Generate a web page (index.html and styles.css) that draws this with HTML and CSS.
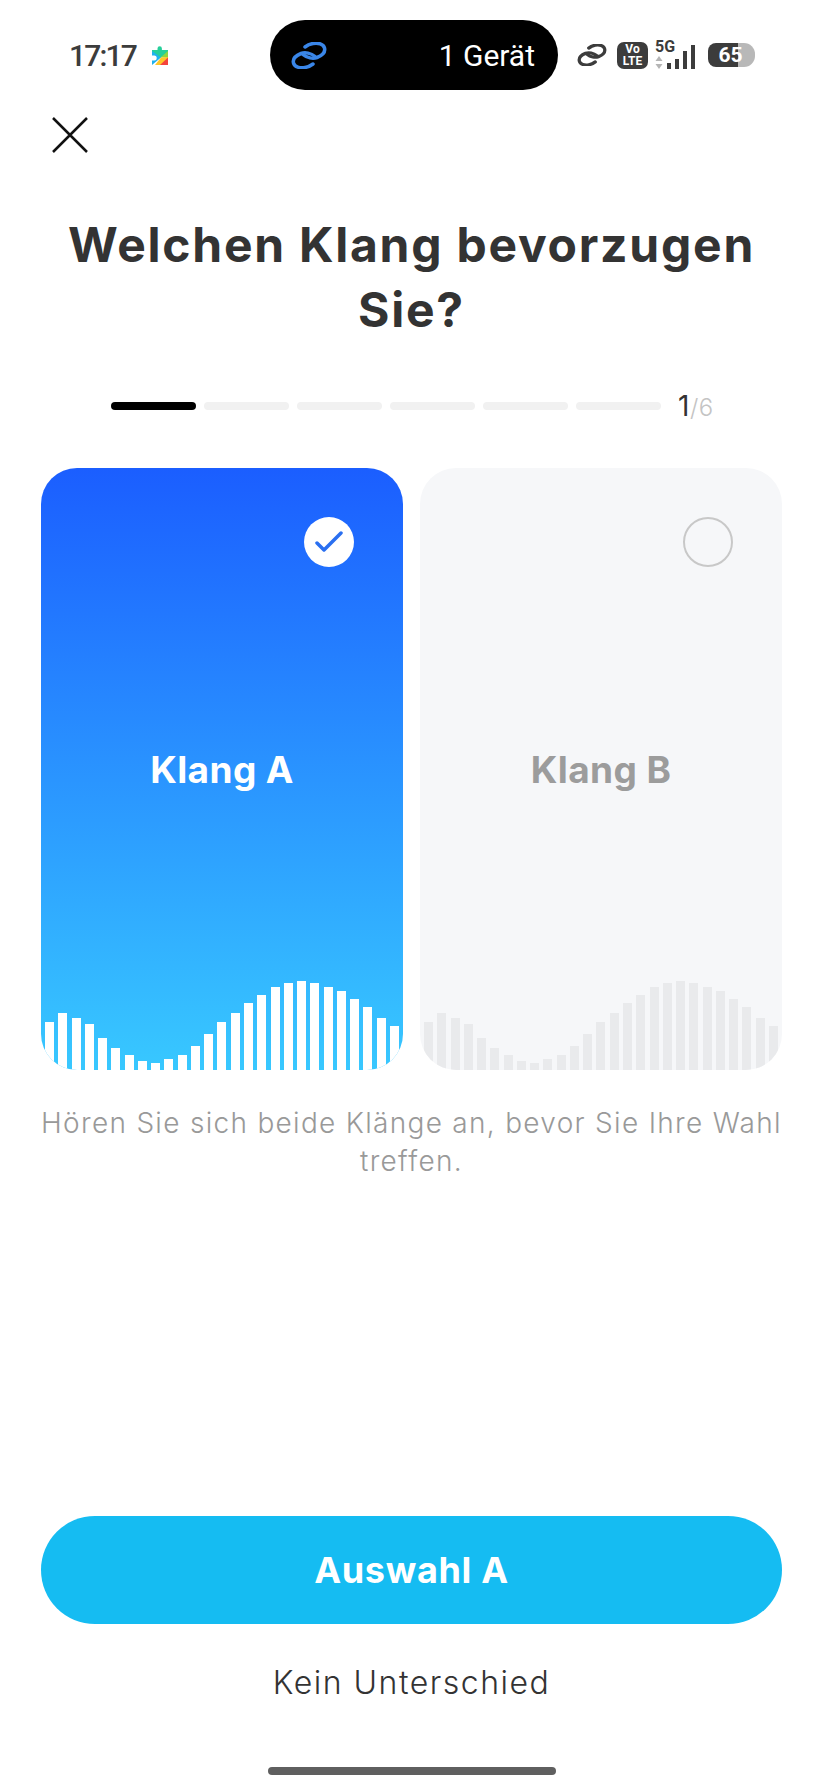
FILE: index.html
```html
<!DOCTYPE html>
<html lang="de">
<head>
    <meta charset="UTF-8">
    <meta name="viewport" content="width=device-width, initial-scale=1.0">
    <title>Klangauswahl</title>
    <link rel="stylesheet" href="styles.css">
</head>
<body>

<div class="page">
    <div class="status-bar">
        <span class="time">17:17</span>
        <svg class="puzzle" viewBox="0 0 16 19" width="16" height="19">
            <path d="M0 4h5.500V2.500a2.200 2.200 0 0 1 4.400 0V4H16v3L8 12 0 7z" fill="#25cf9a"/>
            <path d="M0 5l9 6.500L0 19v-4.500h2.200a2.400 2.400 0 0 0 0-5H0z" fill="#1fb2ee"/>
            <path d="M16 5v6.500L8.500 11.500z" fill="#8fd640"/>
            <path d="M16 11v8H3l6-7.500z" fill="#ffc629"/>
            <path d="M16 11.500V19H8z" fill="#f4433c"/>
        </svg>
        <div class="island">
            <svg class="chain chain-blue" viewBox="0 0 36 27" width="36" height="27">
                <path d="M24 14.500C20 11 14 10 10 11.500 5 13.500 1.500 17 2.500 21c1 4 6.500 5.500 11.500 4.500 3-.5 6-2 8-3.500"/>
                <path d="M12 12.500c4 3.500 10 4.500 14 3 5-2 8.500-5.500 7.500-9.500-1-4-6.500-5.500-11.500-4.500-3 .5-6 2-8 3.500"/>
            </svg>
            <span>1 Gerät</span>
        </div>
        <svg class="chain chain-dark" viewBox="0 0 36 27" width="30" height="22">
            <path d="M24 14.500C20 11 14 10 10 11.500 5 13.500 1.500 17 2.500 21c1 4 6.500 5.500 11.500 4.500 3-.5 6-2 8-3.500"/>
            <path d="M12 12.500c4 3.500 10 4.500 14 3 5-2 8.500-5.500 7.500-9.500-1-4-6.500-5.500-11.500-4.500-3 .5-6 2-8 3.500"/>
        </svg>
        <div class="volte"><span>Vo</span><span>LTE</span></div>
        <div class="signal">
            <span class="five-g">5G</span>
            <div class="signal-row">
                <svg class="arrows" viewBox="0 0 8 13" width="8" height="13">
                    <path d="M4 0l3.500 5h-7z" fill="#b5b5b5"/>
                    <path d="M4 13l3.500-5h-7z" fill="#b5b5b5"/>
                </svg>
                <i class="sig-1"></i><i class="sig-2"></i><i class="sig-3"></i><i class="sig-4"></i>
            </div>
        </div>
        <div class="battery"><span>65</span></div>
    </div>

    <svg class="close" viewBox="0 0 36 36" width="36" height="36">
        <path d="M1 1l34 34M35 1L1 35"/>
    </svg>

    <h1 class="title">Welchen Klang bevorzugen Sie?</h1>

    <div class="progress">
        <div class="step active"></div>
        <div class="step"></div>
        <div class="step"></div>
        <div class="step"></div>
        <div class="step"></div>
        <div class="step"></div>
        <div class="counter"><b>1</b>/6</div>
    </div>

    <div class="cards">
        <div class="card selected">
            <div class="check">
                <svg viewBox="0 0 28 22" width="28" height="22"><path d="M2 12l7 7L26 2"/></svg>
            </div>
            <div class="label">Klang A</div>
            <div class="bars" id="barsA"></div>
        </div>
        <div class="card">
            <div class="check"></div>
            <div class="label">Klang B</div>
            <div class="bars" id="barsB"></div>
        </div>
    </div>

    <p class="note">Hören Sie sich beide Klänge an, bevor Sie Ihre Wahl treffen.</p>

    <button class="button">Auswahl A</button>
    <div class="no-diff">Kein Unterschied</div>
    <div class="home-bar"></div>
</div>

<script>
    // Höhen der Balken, für beide Karten gleich
    const heights = [48, 57, 52, 46, 32, 22, 15, 9, 7, 11, 15, 24, 36, 48, 57, 67, 75, 83, 87, 89, 87, 83, 79, 71, 63, 52, 44];

    ["barsA", "barsB"].forEach(id => {
        const box = document.getElementById(id);
        heights.forEach(h => {
            const bar = document.createElement("div");
            bar.style.height = h + "px";
            box.appendChild(bar);
        });
    });
</script>

</body>
</html>
```

FILE: styles.css
```css
body {
    margin: 0;
    background-color: #fff;
    font-family: Inter, "Open Sans", sans-serif;
}

.page {
    display: flex;
    flex-direction: column;
    height: 1788px;
    box-sizing: border-box;
    overflow: hidden;
}

/* Statusleiste */
.status-bar {
    display: flex;
    align-items: center;
    height: 70px;
    margin-top: 20px;
    padding-left: 69px;
    font-family: Roboto, sans-serif;
    color: #3c3c3c;
}

.time {
    width: 83px;
    font-size: 30px;
    font-weight: 500;
    letter-spacing: -1.8px;
}

.puzzle {
    margin-right: 102px;
}

.island {
    display: flex;
    align-items: center;
    justify-content: space-between;
    width: 288px;
    height: 70px;
    box-sizing: border-box;
    padding: 0 23px 0 21px;
    margin-right: 19px;
    border-radius: 35px;
    background-color: #000;
    color: #fff;
    font-size: 30px;
}

.chain {
    fill: none;
    stroke-width: 3.500;
    stroke-linecap: round;
}

.chain-blue {
    stroke: #3a86e8;
}

.chain-dark {
    stroke: #3c3c3c;
    stroke-width: 4;
    margin-right: 10px;
}

.volte {
    display: flex;
    flex-direction: column;
    align-items: center;
    justify-content: center;
    width: 31px;
    height: 27px;
    margin-right: 7px;
    border-radius: 7px;
    background-color: #3c3c3c;
    color: #fff;
    font-size: 12px;
    font-weight: 700;
    line-height: 12px;
}

.signal {
    display: flex;
    flex-direction: column;
    width: 41px;
    margin-right: 12px;
}

.five-g {
    font-size: 16px;
    font-weight: 700;
    line-height: 12px;
    margin-bottom: 2px;
}

.signal-row {
    display: flex;
    align-items: flex-end;
    height: 14px;
    gap: 3.600px;
}

.signal-row .arrows {
    flex: none;
}

.signal-row i {
    display: block;
    flex: none;
    width: 4.500px;
    background-color: #3c3c3c;
}

.sig-1 { height: 6px; }
.sig-2 { height: 10px; }
.sig-3 { height: 18px; }
.sig-4 { height: 24px; }

.battery {
    display: flex;
    align-items: center;
    justify-content: center;
    width: 47px;
    height: 24px;
    box-sizing: border-box;
    padding-right: 2px;
    border-radius: 8px 11px 11px 8px;
    background: linear-gradient(to right, #3c3c3c 30px, #b8b8b8 30px);
    color: #fff;
    font-size: 21px;
    font-weight: 700;
}

/* Inhalt */
.close {
    flex: none;
    margin: 27px 0 0 52px;
    fill: none;
    stroke: #111;
    stroke-width: 2.500;
}

.title {
    margin: 59px 60px 0;
    color: #333;
    font-size: 48px;
    font-weight: 700;
    line-height: 65px;
    letter-spacing: 1.75px;
    text-align: center;
}

.progress {
    display: flex;
    align-items: center;
    gap: 8.500px;
    height: 8px;
    margin: 60px 0 0 111px;
}

.step {
    width: 84.500px;
    height: 8px;
    border-radius: 4px;
    background-color: #f1f1f1;
}

.step.active {
    background-color: #000;
}

.counter {
    margin-left: 9px;
    color: #c4c4c4;
    font-size: 24px;
    font-weight: 300;
    letter-spacing: 0.5px;
}

.counter b {
    color: #333;
    font-size: 28px;
    font-weight: 400;
}

.cards {
    display: flex;
    gap: 17px;
    margin: 58px 41px 0;
}

.card {
    position: relative;
    display: flex;
    align-items: center;
    justify-content: center;
    width: 362px;
    height: 602px;
    border-radius: 36px;
    overflow: hidden;
    background-color: #f6f7f9;
    color: #9c9c9c;
}

.card.selected {
    background: linear-gradient(to bottom, #1b5eff, #38c8ff);
    color: #fff;
}

.label {
    font-size: 37px;
    font-weight: 700;
    letter-spacing: 0.4px;
}

.check {
    position: absolute;
    top: 49px;
    right: 49px;
    width: 50px;
    height: 50px;
    box-sizing: border-box;
    border: 2px solid #c8c8c8;
    border-radius: 50%;
    display: flex;
    align-items: center;
    justify-content: center;
}

.selected .check {
    border: none;
    background-color: #fff;
}

.check svg {
    fill: none;
    stroke: #2a6ff0;
    stroke-width: 3.500;
    stroke-linecap: round;
    stroke-linejoin: round;
}

.bars {
    position: absolute;
    left: 4px;
    right: 4px;
    bottom: 0;
    display: flex;
    align-items: flex-end;
    justify-content: space-between;
}

.bars div {
    width: 9px;
    background-color: #e9eaec;
}

.selected .bars div {
    background-color: #fff;
}

.note {
    margin: 34px 30px 0;
    color: #999;
    font-size: 28px;
    font-weight: 300;
    line-height: 38px;
    letter-spacing: 1.3px;
    text-align: center;
}

.button {
    flex: none;
    height: 108px;
    margin: auto 41px 0;
    border: none;
    border-radius: 54px;
    background-color: #15bcf2;
    color: #fff;
    font-family: inherit;
    font-size: 36px;
    font-weight: 700;
    letter-spacing: 0.7px;
}

.no-diff {
    margin-top: 39px;
    color: #333;
    font-size: 32px;
    font-weight: 300;
    line-height: 40px;
    letter-spacing: 1.5px;
    text-align: center;
}

.home-bar {
    flex: none;
    width: 288px;
    height: 8px;
    margin: 64px auto 13px;
    border-radius: 4px;
    background-color: #5f5f5f;
}
```
